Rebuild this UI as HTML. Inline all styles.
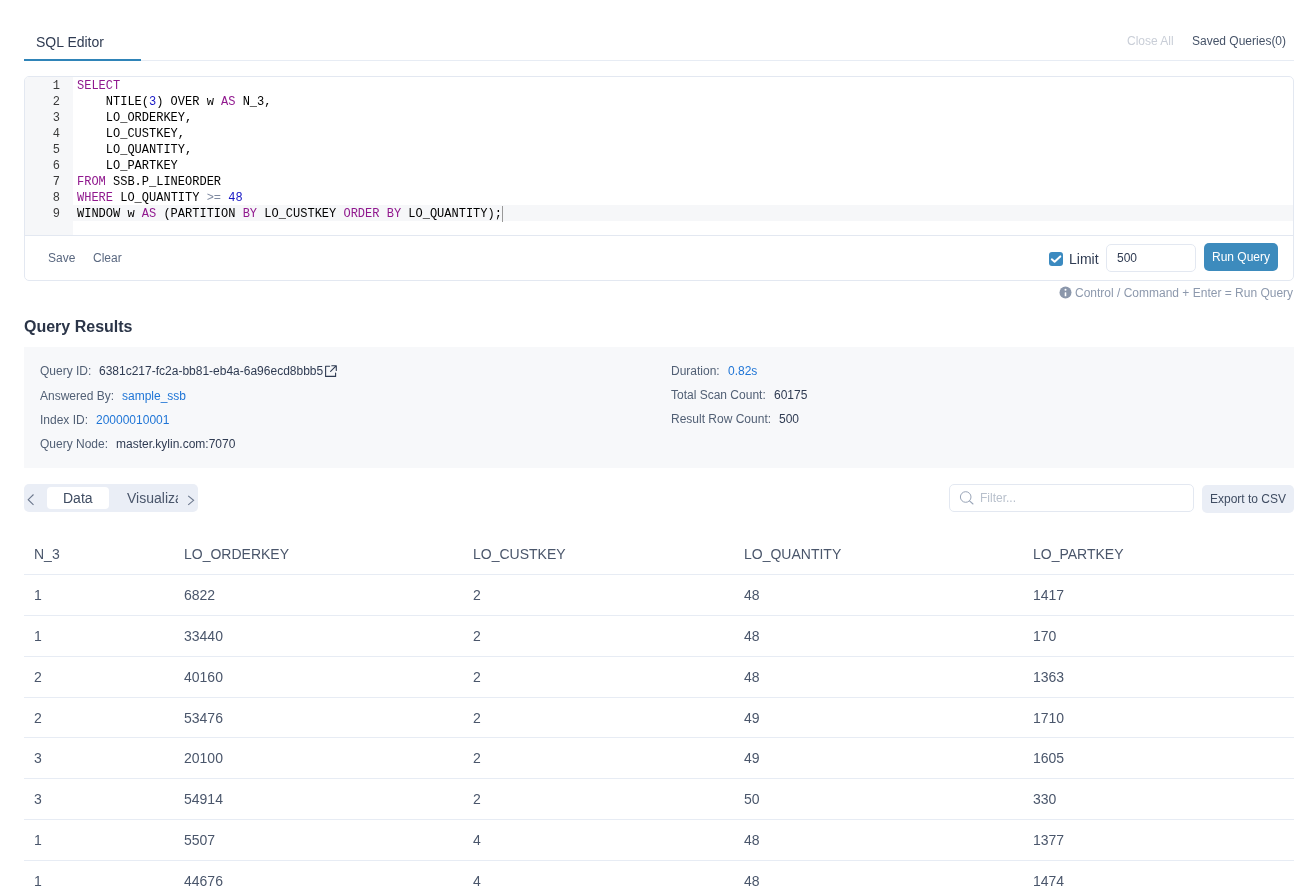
<!DOCTYPE html>
<html><head><meta charset="utf-8">
<style>
*{box-sizing:border-box;margin:0;padding:0}
html,body{width:1312px;height:895px;overflow:hidden;background:#fff}
body{font-family:"Liberation Sans",sans-serif;color:#2f3b52;position:relative}
.abs{position:absolute;white-space:nowrap}
/* top tabs */
.tabbar{position:absolute;left:24px;top:60px;width:1270px;height:1px;background:#e7ecf4}
.tabul{position:absolute;left:24px;top:59px;width:117px;height:2px;background:#2f84b8}
.tabtitle{left:36px;top:34px;font-size:14px;color:#2f3b52}
.closeall{left:1127px;top:34px;font-size:12px;color:#c9ced7}
.saved{left:1192px;top:34px;font-size:12px;color:#465368}
/* editor */
.editor{position:absolute;left:24px;top:76px;width:1270px;height:205px;border:1px solid #e3e8f1;border-radius:5px;overflow:hidden}
.gutter{position:absolute;left:0;top:0;width:48px;height:159px;background:#f6f7f9}
.edsep{position:absolute;left:0;top:158px;width:1270px;height:1px;background:#e3e8f1}
.activeline{position:absolute;left:48px;top:128px;width:1220px;height:16px;background:#f6f7f9}
.code{position:absolute;left:0;top:1px;font-family:"Liberation Mono",monospace;font-size:12px;line-height:16px;color:#000}
.ln{position:absolute;left:0;width:35px;text-align:right;color:#3a3a3a}
.cl{position:absolute;left:52px;white-space:pre}
.kw{color:#90188e}
.nm{color:#1616c4}
.op{color:#7f8aa0}
.cursor{display:inline-block;width:1px;height:16px;background:#999;vertical-align:top}
.save{left:48px;top:251px;font-size:12px;color:#5a6880}
.clear{left:93px;top:251px;font-size:12px;color:#5a6880}
.chk{position:absolute;left:1049px;top:252px;width:14px;height:14px;border-radius:3px;background:#3b8ac0}
.limit{left:1069px;top:251px;font-size:14px;color:#2f3b52}
.limitin{position:absolute;left:1106px;top:244px;width:90px;height:28px;border:1px solid #e3e8f1;border-radius:5px;background:#fff}
.limitv{left:1117px;top:251px;font-size:12px;color:#2f3b52}
.runbtn{position:absolute;left:1204px;top:243px;width:74px;height:28px;border-radius:5px;background:#3d8bbd;color:#fff;font-size:12px;text-align:center;line-height:28px}
.hint{left:1075px;top:286px;font-size:12px;color:#8d99ad}
.qr{left:24px;top:318px;font-size:16px;font-weight:bold;color:#2b3548}
/* info */
.info{position:absolute;left:24px;top:347px;width:1270px;height:121px;background:#f7f8fa}
.lbl{font-size:12px;color:#526075}
.val{font-size:12px;color:#2f3b52}
.lnk{font-size:12px;color:#1f75d6}
/* tabs2 */
.seg{position:absolute;left:24px;top:484px;width:174px;height:28px;background:#eaeef6;border-radius:5px}
.segact{position:absolute;left:47px;top:487px;width:62px;height:22px;background:#fff;border-radius:4px}
.filter{position:absolute;left:949px;top:484px;width:245px;height:28px;border:1px solid #e3e8f1;border-radius:5px;background:#fff}
.export{position:absolute;left:1202px;top:485px;width:92px;height:28px;background:#eaeef6;border-radius:5px;font-size:12px;color:#3f4c62;text-align:center;line-height:29px}
/* table */
.th{font-size:14px;color:#4a566b}
.td{font-size:14px;color:#4a566b}
.hr{position:absolute;left:24px;width:1270px;height:1px;background:#e7ecf4}
</style></head><body><div id="wrap" style="position:absolute;left:0;top:0;width:1312px;height:895px;will-change:transform">
<div class="abs tabtitle">SQL Editor</div>
<div class="tabbar"></div><div class="tabul"></div>
<div class="abs closeall">Close All</div>
<div class="abs saved">Saved Queries(0)</div>

<div class="editor">
  <div class="gutter"></div>
  <div class="activeline"></div>
  <div class="edsep"></div>
  <div class="code">
    <div class="ln" style="top:0">1</div><div class="cl" style="top:0"><span class="kw">SELECT</span></div>
    <div class="ln" style="top:16px">2</div><div class="cl" style="top:16px">    NTILE(<span class="nm">3</span>) OVER w <span class="kw">AS</span> N_3,</div>
    <div class="ln" style="top:32px">3</div><div class="cl" style="top:32px">    LO_ORDERKEY,</div>
    <div class="ln" style="top:48px">4</div><div class="cl" style="top:48px">    LO_CUSTKEY,</div>
    <div class="ln" style="top:64px">5</div><div class="cl" style="top:64px">    LO_QUANTITY,</div>
    <div class="ln" style="top:80px">6</div><div class="cl" style="top:80px">    LO_PARTKEY</div>
    <div class="ln" style="top:96px">7</div><div class="cl" style="top:96px"><span class="kw">FROM</span> SSB.P_LINEORDER</div>
    <div class="ln" style="top:112px">8</div><div class="cl" style="top:112px"><span class="kw">WHERE</span> LO_QUANTITY <span class="op">&gt;=</span> <span class="nm">48</span></div>
    <div class="ln" style="top:128px">9</div><div class="cl" style="top:128px">WINDOW w <span class="kw">AS</span> (PARTITION <span class="kw">BY</span> LO_CUSTKEY <span class="kw">ORDER</span> <span class="kw">BY</span> LO_QUANTITY);<span class="cursor"></span></div>
  </div>
</div>
<div class="abs save">Save</div>
<div class="abs clear">Clear</div>
<div class="chk"><svg width="14" height="14" style="position:absolute;left:0;top:0"><path d="M2.8 7.3 L5.6 9.8 L11.3 4.4" fill="none" stroke="#fff" stroke-width="2" stroke-linecap="round" stroke-linejoin="round"/></svg></div>
<div class="abs limit">Limit</div>
<div class="limitin"></div>
<div class="abs limitv">500</div>
<div class="runbtn">Run Query</div>
<svg class="abs" style="left:1059px;top:286px" width="13" height="13"><circle cx="6.5" cy="6.5" r="6" fill="#8b97ab"/><circle cx="6.5" cy="3.7" r="1" fill="#fff"/><rect x="5.7" y="6.3" width="1.6" height="4" rx="0.4" fill="#fff"/></svg>
<div class="abs hint">Control / Command + Enter = Run Query</div>

<div class="abs qr">Query Results</div>
<div class="info"></div>
<div class="abs lbl" style="left:40px;top:364px">Query ID:</div><div class="abs val" style="left:99px;top:364px">6381c217-fc2a-bb81-eb4a-6a96ecd8bbb5</div><svg class="abs" style="left:324px;top:364px" width="14" height="14"><path d="M5.6 2.3 H1.6 V12.4 H11.6 V9" fill="none" stroke="#2f3b52" stroke-width="1.1" stroke-linejoin="round" stroke-linecap="round"/><path d="M6.6 7.4 L12.1 1.9 M7.8 1.8 H12.3 V6.4" fill="none" stroke="#2f3b52" stroke-width="1.1" stroke-linejoin="round" stroke-linecap="round"/></svg>
<div class="abs lbl" style="left:40px;top:389px">Answered By:</div><div class="abs lnk" style="left:122px;top:389px">sample_ssb</div>
<div class="abs lbl" style="left:40px;top:413px">Index ID:</div><div class="abs lnk" style="left:96px;top:413px">20000010001</div>
<div class="abs lbl" style="left:40px;top:437px">Query Node:</div><div class="abs val" style="left:116px;top:437px">master.kylin.com:7070</div>
<div class="abs lbl" style="left:671px;top:364px">Duration:</div><div class="abs lnk" style="left:728px;top:364px">0.82s</div>
<div class="abs lbl" style="left:671px;top:388px">Total Scan Count:</div><div class="abs val" style="left:774px;top:388px">60175</div>
<div class="abs lbl" style="left:671px;top:412px">Result Row Count:</div><div class="abs val" style="left:779px;top:412px">500</div>

<div class="seg"></div><div class="segact"></div><svg class="abs" style="left:24px;top:490px" width="14" height="18"><path d="M9.5 4.5 L4.2 9.7 L9.5 14.8" fill="none" stroke="#6b778c" stroke-width="1.1"/></svg><svg class="abs" style="left:184px;top:490px" width="14" height="18"><path d="M4.2 5.8 L9.6 10.3 L4.2 14.8" fill="none" stroke="#6b778c" stroke-width="1.1"/></svg>
<div class="abs" style="left:63px;top:490px;font-size:14px;color:#3f4c62">Data</div>
<div class="abs" style="left:127px;top:490px;font-size:14px;color:#4a566b;width:51px;overflow:hidden">Visualization</div>
<div class="filter"></div><svg class="abs" style="left:958px;top:489px" width="18" height="18"><circle cx="7.7" cy="8" r="5.3" fill="none" stroke="#9aa5b8" stroke-width="1"/><path d="M11.5 11.8 L15 15" stroke="#9aa5b8" stroke-width="1.1" stroke-linecap="round"/></svg>
<div class="abs" style="left:980px;top:491px;font-size:12px;color:#b8c0cc">Filter...</div>
<div class="export">Export to CSV</div>

<div class="abs th" style="left:34px;top:546px">N_3</div>
<div class="abs th" style="left:184px;top:546px">LO_ORDERKEY</div>
<div class="abs th" style="left:473px;top:546px">LO_CUSTKEY</div>
<div class="abs th" style="left:744px;top:546px">LO_QUANTITY</div>
<div class="abs th" style="left:1033px;top:546px">LO_PARTKEY</div>
<div class="hr" style="top:574px"></div>
<div class="abs td" style="left:34px;top:587px">1</div>
<div class="abs td" style="left:184px;top:587px">6822</div>
<div class="abs td" style="left:473px;top:587px">2</div>
<div class="abs td" style="left:744px;top:587px">48</div>
<div class="abs td" style="left:1033px;top:587px">1417</div>
<div class="hr" style="top:615px"></div>
<div class="abs td" style="left:34px;top:628px">1</div>
<div class="abs td" style="left:184px;top:628px">33440</div>
<div class="abs td" style="left:473px;top:628px">2</div>
<div class="abs td" style="left:744px;top:628px">48</div>
<div class="abs td" style="left:1033px;top:628px">170</div>
<div class="hr" style="top:656px"></div>
<div class="abs td" style="left:34px;top:669px">2</div>
<div class="abs td" style="left:184px;top:669px">40160</div>
<div class="abs td" style="left:473px;top:669px">2</div>
<div class="abs td" style="left:744px;top:669px">48</div>
<div class="abs td" style="left:1033px;top:669px">1363</div>
<div class="hr" style="top:697px"></div>
<div class="abs td" style="left:34px;top:710px">2</div>
<div class="abs td" style="left:184px;top:710px">53476</div>
<div class="abs td" style="left:473px;top:710px">2</div>
<div class="abs td" style="left:744px;top:710px">49</div>
<div class="abs td" style="left:1033px;top:710px">1710</div>
<div class="hr" style="top:737px"></div>
<div class="abs td" style="left:34px;top:750px">3</div>
<div class="abs td" style="left:184px;top:750px">20100</div>
<div class="abs td" style="left:473px;top:750px">2</div>
<div class="abs td" style="left:744px;top:750px">49</div>
<div class="abs td" style="left:1033px;top:750px">1605</div>
<div class="hr" style="top:778px"></div>
<div class="abs td" style="left:34px;top:791px">3</div>
<div class="abs td" style="left:184px;top:791px">54914</div>
<div class="abs td" style="left:473px;top:791px">2</div>
<div class="abs td" style="left:744px;top:791px">50</div>
<div class="abs td" style="left:1033px;top:791px">330</div>
<div class="hr" style="top:819px"></div>
<div class="abs td" style="left:34px;top:832px">1</div>
<div class="abs td" style="left:184px;top:832px">5507</div>
<div class="abs td" style="left:473px;top:832px">4</div>
<div class="abs td" style="left:744px;top:832px">48</div>
<div class="abs td" style="left:1033px;top:832px">1377</div>
<div class="hr" style="top:860px"></div>
<div class="abs td" style="left:34px;top:873px">1</div>
<div class="abs td" style="left:184px;top:873px">44676</div>
<div class="abs td" style="left:473px;top:873px">4</div>
<div class="abs td" style="left:744px;top:873px">48</div>
<div class="abs td" style="left:1033px;top:873px">1474</div>
<div class="hr" style="top:901px"></div>
</div></body></html>
